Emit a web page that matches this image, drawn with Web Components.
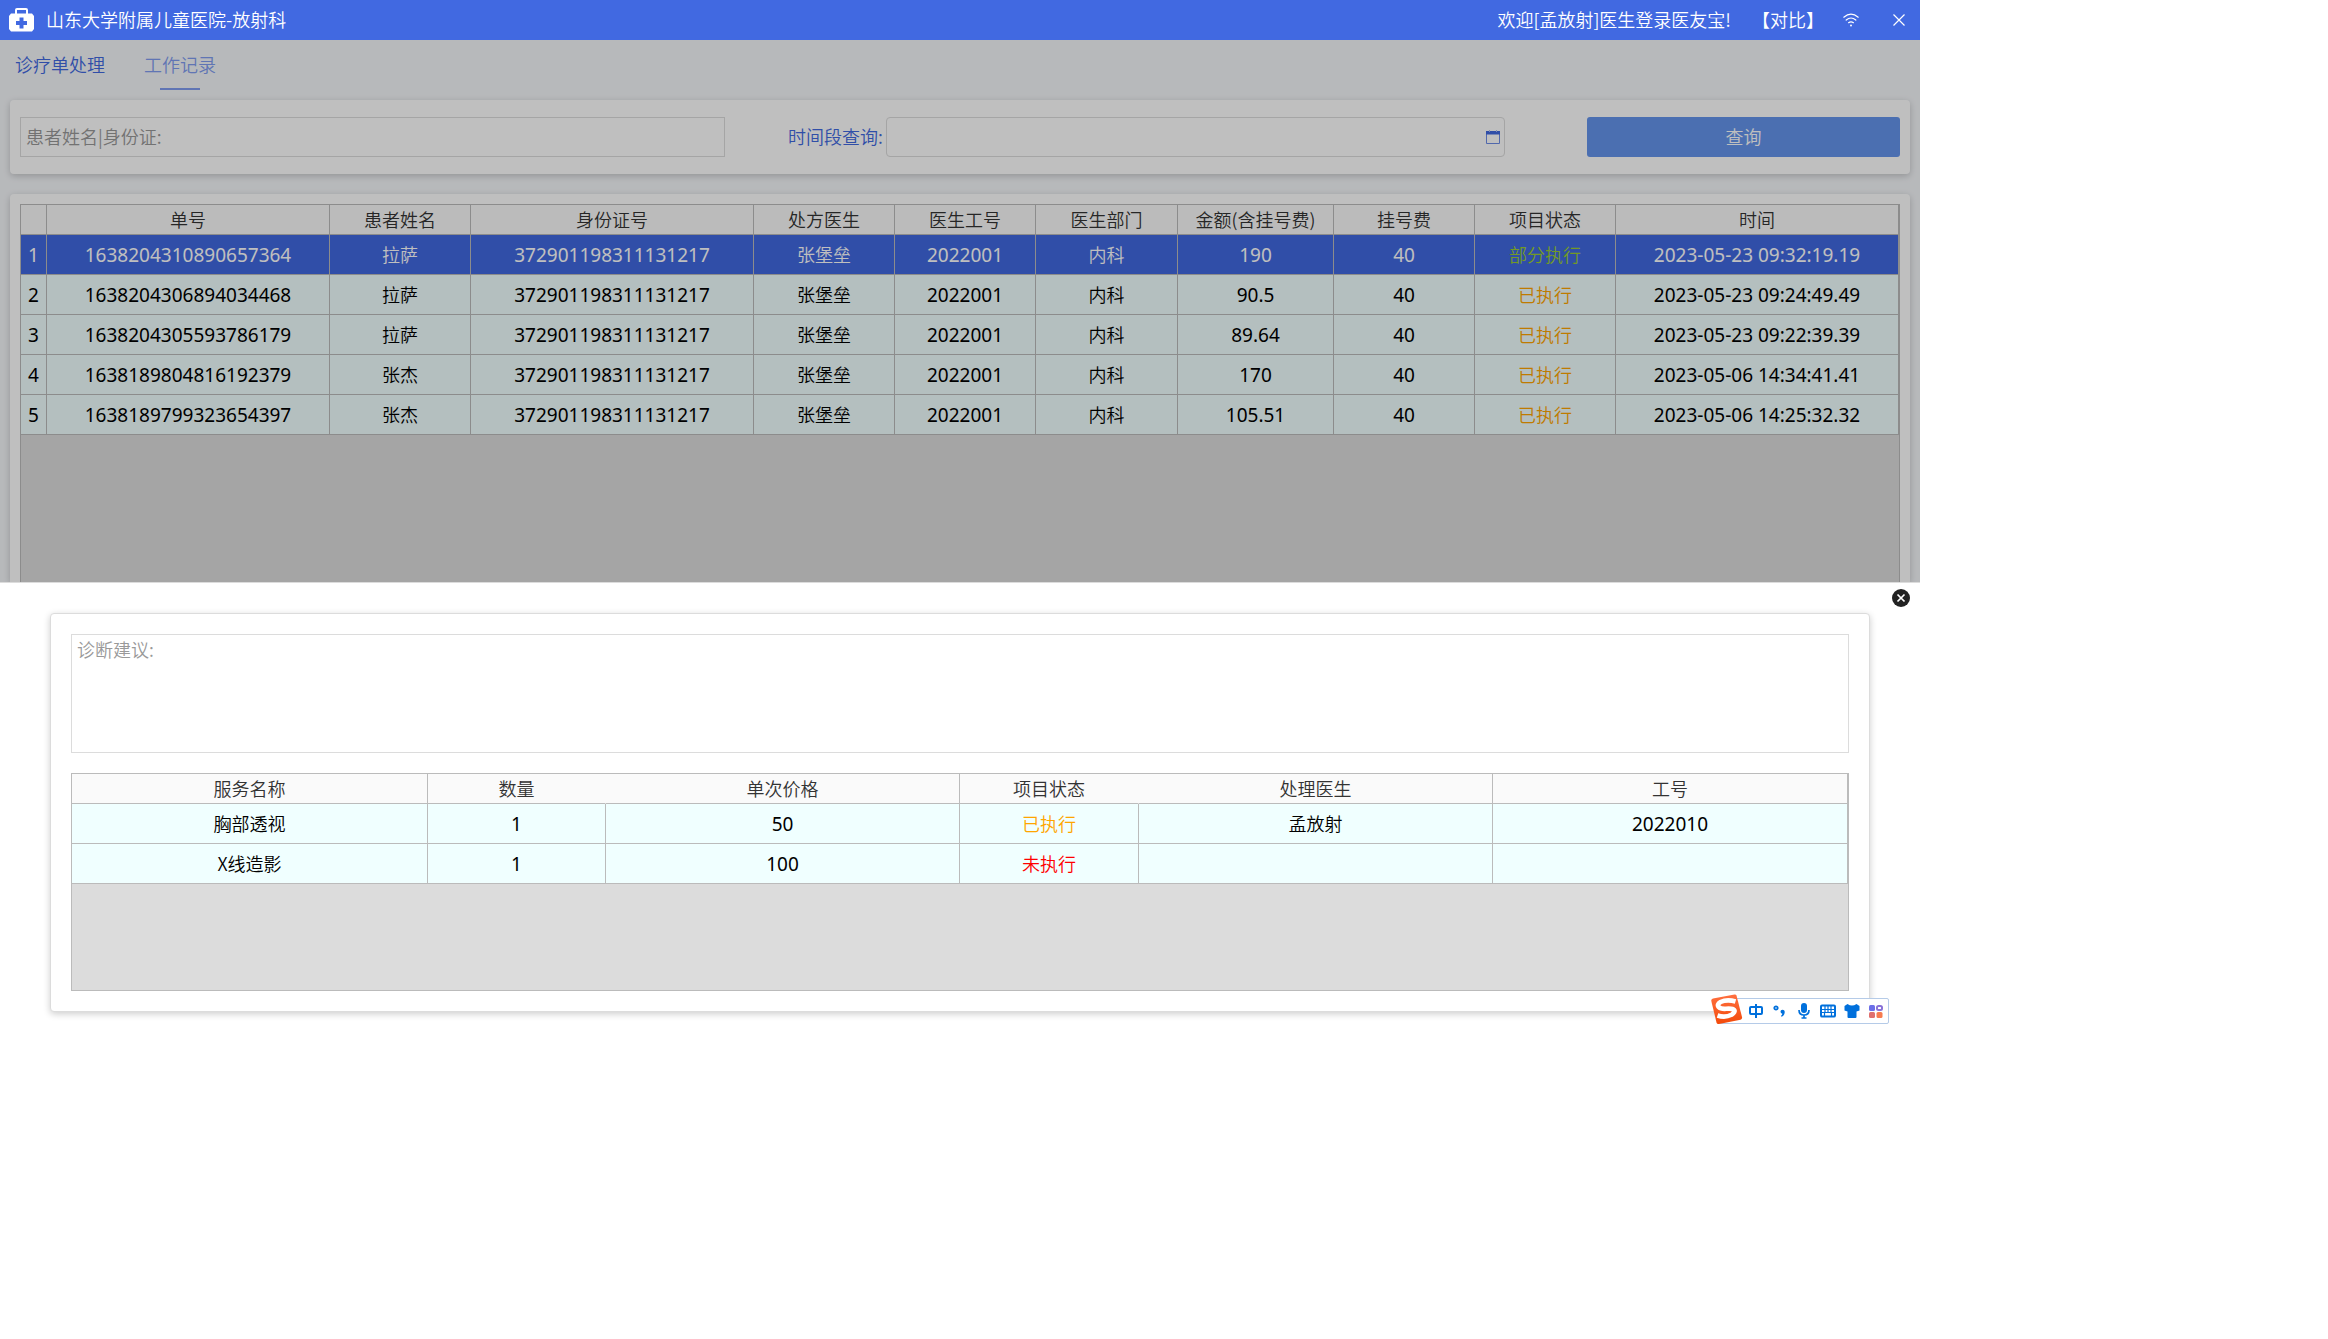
<!DOCTYPE html>
<html lang="zh-CN">
<head>
<meta charset="utf-8">
<title>山东大学附属儿童医院-放射科</title>
<style>
  html, body { margin: 0; background: #fff; }
  body { font: 350 18px/24px "Noto Sans CJK SC", sans-serif; color: #333; }
</style>
</head>
<body>
<hospital-app></hospital-app>
<script>
class BaseElement extends HTMLElement {
  connectedCallback() {
    if (this.shadowRoot) return;
    this.attachShadow({ mode: 'open' }).innerHTML = '<style>*{box-sizing:border-box}' + this.css() + '</style>' + this.html();
  }
  css() { return ''; }
  html() { return '<slot></slot>'; }
}

customElements.define('title-bar', class extends BaseElement {
  css() { return `
    :host { box-sizing: border-box; display: flex; align-items: center; height: 40px; padding: 0 15px 0 9px; background: #4169e1; color: #fff; }
    h1 { font: inherit; margin: 0 auto 0 12px; padding-bottom: 2px; }
    span { padding-bottom: 2px; }
    svg { display: block; }
    button { border: 0; background: none; padding: 0; margin: 0; font: inherit; color: inherit; }
    .compare { margin: 0 19px 0 21px; padding-bottom: 2px; }
    .close { margin-left: 34px; }
  `; }
  html() { return `
    <svg width="25" height="24" viewBox="0 0 25 24"><path d="M7 6V2Q7 1 8 1H17Q18 1 18 2V6" fill="none" stroke="#fff" stroke-width="2"/><path fill="#fff" fill-rule="evenodd" d="M2 5.500H23L25 8V21L23 23.500H2L0 21V8ZM10.500 9.500V13H7V17H10.500V20.500H14.500V17H18V13H14.500V9.500Z"/></svg>
    <h1>山东大学附属儿童医院-放射科</h1>
    <span>欢迎[孟放射]医生登录医友宝!</span>
    <button class="compare">【对比】</button>
    <svg width="16" height="14" viewBox="0 0 16 14" fill="none" stroke="#fff" stroke-width="1.200" stroke-linecap="round"><path d="M.8 4.200Q8-2 15.200 4.200M3.200 7Q8 3 12.800 7M5.600 9.700Q8 7.900 10.400 9.700"/><circle cx="8" cy="12.600" r=".4"/></svg>
    <button class="close" aria-label="关闭窗口"><svg width="12" height="12" viewBox="0 0 12 12" stroke="#fff" stroke-width="1.200"><path d="M.5.500 11.500 11.500M11.500.500.500 11.500"/></svg></button>
  `; }
});

customElements.define('main-tabs', class extends BaseElement {
  css() { return `
    :host { box-sizing: border-box; display: flex; gap: 39px; height: 50px; padding-left: 5px; margin-bottom: 10px; }
    a { display: flex; flex-direction: column; align-items: center; justify-content: space-between; padding-top: 12px; color: #4169e1; text-decoration: none; }
    a.on { color: #819df0; }
    a.on::after { content: ""; width: 40px; height: 2px; background: #819df0; }
  `; }
  html() { return `<a href="#orders">诊疗单处理</a><a href="#log" class="on">工作记录</a>`; }
});

customElements.define('app-card', class extends BaseElement {
  css() { return `
    :host { box-sizing: border-box; display: block; background: #fff; border-radius: 4px; box-shadow: 0 2px 7px rgba(0,0,0,.2); }
  `; }
});

customElements.define('search-form', class extends BaseElement {
  css() { return `
    :host { display: grid; grid-template-columns: 705fr 63fr 717fr 82fr 313fr; padding: 17px 10px; }
    input, button { font: inherit; height: 40px; margin: 0; outline: 0; min-width: 0; }
    input { border: 1px solid #dcdcdc; background: #fff; padding: 0 5px 2px; color: #333; }
    input::placeholder { color: #999; opacity: 1; }
    .range { grid-column: 3; display: flex; align-items: center; gap: 3px; color: #4169e1; }
    label { padding-bottom: 2px; }
    .box { flex: 1; display: flex; align-items: center; height: 40px; border: 1px solid #dcdcdc; border-radius: 4px; padding-right: 4px; }
    .box input { flex: 1; height: 38px; border: 0; background: none; }
    .box button { height: 14px; border: 0; padding: 0; background: none; display: block; }
    svg { display: block; }
    .go { grid-column: 5; border: 0; border-radius: 3px; padding: 0 0 2px; background: #6495ed; color: #fff; }
  `; }
  html() { return `
    <input type="text" aria-label="患者姓名|身份证" placeholder="患者姓名|身份证:">
    <div class="range"><label for="range">时间段查询:</label>
      <div class="box"><input id="range" type="text"><button aria-label="选择日期"><svg width="14" height="14" viewBox="0 0 14 14"><path d="M.5 4V13.500H13.500V4" fill="none" stroke="#6c8be6"/><path d="M0 1H14V4.500H0Z" fill="#4169e1"/><path d="M3 0H4V2H3ZM10 0H11V2H10Z" fill="#a9bbf1"/></svg></button></div>
    </div>
    <button class="go">查询</button>
  `; }
});

const ORDERS = {
  cols: [26, 283, 141, 283, 141, 141, 142, 156, 141, 141, 283],
  head: ['', '单号', '患者姓名', '身份证号', '处方医生', '医生工号', '医生部门', '金额(含挂号费)', '挂号费', '项目状态', '时间'],
  rows: [
    ['1', '1638204310890657364', '拉萨', '372901198311131217', '张堡垒', '2022001', '内科', '190', '40', '部分执行', '2023-05-23 09:32:19.19'],
    ['2', '1638204306894034468', '拉萨', '372901198311131217', '张堡垒', '2022001', '内科', '90.5', '40', '已执行', '2023-05-23 09:24:49.49'],
    ['3', '1638204305593786179', '拉萨', '372901198311131217', '张堡垒', '2022001', '内科', '89.64', '40', '已执行', '2023-05-23 09:22:39.39'],
    ['4', '1638189804816192379', '张杰', '372901198311131217', '张堡垒', '2022001', '内科', '170', '40', '已执行', '2023-05-06 14:34:41.41'],
    ['5', '1638189799323654397', '张杰', '372901198311131217', '张堡垒', '2022001', '内科', '105.51', '40', '已执行', '2023-05-06 14:25:32.32'],
  ],
  selected: 0,
};
const SERVICES = {
  cols: [356, 178, 354, 179, 354, 355],
  head: ['服务名称', '数量', '单次价格', '项目状态', '处理医生', '工号'],
  openHead: [1, 3],
  rows: [
    ['胸部透视', '1', '50', '已执行', '孟放射', '2022010'],
    ['X线造影', '1', '100', '未执行', '', ''],
  ],
};
const SOURCES = { orders: ORDERS, services: SERVICES };
const STATUS = { '部分执行': 'part', '已执行': 'done', '未执行': 'todo' };

customElements.define('data-grid', class extends BaseElement {
  css() { return `
    :host { box-sizing: border-box; display: block; border: 1px solid #bbb; background: #dcdcdc; }
    table { width: 100%; table-layout: fixed; border-collapse: separate; border-spacing: 0; }
    th, td { padding: 0 0 2px; text-align: center; white-space: nowrap; border-right: 1px solid #bbb; border-bottom: 1px solid #bbb; }
    th { height: 30px; font-weight: 350; background: #fafafa; color: #333; }
    th.open { border-right-color: #fafafa; }
    td { height: 40px; font-weight: 350; background: #f0ffff; color: #000; }
    td.num { font-family: "Noto Sans", sans-serif; font-size: 19px; font-weight: 400; padding: 0; }
    .sel td { background: #4169e1; color: #fff; }
    td.done { color: #ffa500; } td.todo { color: #f00; }
    .sel td.part { color: #9acd32; }
  `; }
  html() {
    const d = SOURCES[this.getAttribute('source')];
    const open = d.openHead || [];
    const cell = v => `<td class="${STATUS[v] || (/^[\d .:-]+$/.test(v) ? 'num' : '')}">${v}</td>`;
    return `<table><colgroup>${d.cols.map(w => `<col style="width:${w}px">`).join('')}</colgroup>
      <thead><tr>${d.head.map((h, i) => `<th scope="col"${open.includes(i) ? ' class="open"' : ''}>${h}</th>`).join('')}</tr></thead>
      <tbody>${d.rows.map((r, i) => `<tr${i === d.selected ? ' class="sel"' : ''}>${r.map(cell).join('')}</tr>`).join('')}</tbody></table>`;
  }
});

customElements.define('detail-drawer', class extends BaseElement {
  css() { return `
    :host { display: block; position: relative; background: #fff; border-top: 1px solid #dcdcdc; padding: 30px 50px; }
    app-card { border: 1px solid #dcdcdc; padding: 20px; }
    textarea { display: block; width: 100%; height: 119px; border: 1px solid #dcdcdc; margin: 0 0 20px; padding: 2px 5px; font: inherit; resize: none; outline: 0; }
    textarea::placeholder { color: #999; opacity: 1; }
    data-grid { min-height: 218px; }
    .close { position: absolute; top: 6px; right: 10px; width: 18px; height: 18px; border: 0; padding: 0; background: none; }
    svg { display: block; }
  `; }
  html() { return `
    <button class="close" aria-label="关闭"><svg width="18" height="18" viewBox="0 0 18 18"><circle cx="9" cy="9" r="9" fill="#222"/><path d="M5.500 5.500 12.500 12.500M12.500 5.500 5.500 12.500" stroke="#fff" stroke-width="1.700"/></svg></button>
    <app-card>
      <textarea aria-label="诊断建议" placeholder="诊断建议:"></textarea>
      <data-grid source="services"></data-grid>
    </app-card>
  `; }
});

customElements.define('ime-bar', class extends BaseElement {
  css() { return `
    :host { box-sizing: border-box; position: absolute; right: 31px; bottom: 18px; display: flex; align-items: center; gap: 8px; height: 26px; padding: 0 4px 0 28px; background: #fff; border: 1px solid #b5cbe8; border-radius: 2px; }
    .logo { position: absolute; left: -9px; top: -5px; }
    svg { display: block; }
  `; }
  html() { return `
    <svg class="logo" width="32" height="32" viewBox="0 0 32 32"><defs><linearGradient id="o" x2="0" y2="1"><stop offset="0" stop-color="#ff7040"/><stop offset="1" stop-color="#f34a0a"/></linearGradient></defs><path d="M2 4.500 23.500.500Q25 .300 25.500 1.500L31 23Q31.500 25 29.500 25.700L8 30Q6 30.400 5.500 28.500L.3 7Q0 5 2 4.500Z" fill="url(#o)"/><path d="M24.500 7.500Q16 5 9.500 8C4 11.500 8 15.200 15 14.800 24 14 26 17 20.500 20.800Q14 24 6.500 21.500" fill="none" stroke="#fff" stroke-width="4.600"/></svg>
    <svg width="16" height="16" viewBox="0 0 16 16" fill="none" stroke="#0070dc" stroke-width="2"><rect x="2" y="4" width="12" height="7" rx="1"/><path d="M8 1V15"/></svg>
    <svg width="16" height="16" viewBox="0 0 16 16"><circle cx="4" cy="5" r="1.700" fill="none" stroke="#0070dc" stroke-width="1.800"/><path d="M8.500 8.500Q8.500 6.700 10.500 6.700 12.900 6.700 12.700 9.500 12.400 12.800 9.200 13.800V12.500Q10.300 12 10.300 10.800 8.500 10.500 8.500 8.500Z" fill="#0070dc"/></svg>
    <svg width="16" height="16" viewBox="0 0 16 16"><rect x="5" y="0" width="6" height="10" rx="3" fill="#0070dc"/><path d="M3 7Q3 12 8 12 13 12 13 7M8 12V15.500M5.500 15H10.500" fill="none" stroke="#0070dc" stroke-width="1.700"/></svg>
    <svg width="16" height="16" viewBox="0 0 16 16"><rect x="1" y="2.500" width="14" height="11" rx="1" fill="none" stroke="#0070dc" stroke-width="2"/><path d="M2 6.500H14M2 9.500H14M5 3V9.500M8 3V9.500M11 3V9.500M4.500 10V13M11.500 10V13" stroke="#0070dc" stroke-width="1.200"/></svg>
    <svg width="16" height="16" viewBox="0 0 16 16"><path d="M3.500 1Q8 4 12.500 1L15.500 3V7.500L12.500 8.500V14Q12.500 15 11.500 15H4.500Q3.500 15 3.500 14V8.500L.5 7.500V3Z" fill="#0070dc"/></svg>
    <svg width="16" height="16" viewBox="0 0 16 16"><rect x="1" y="2" width="6" height="6" rx="1.500" fill="#6c6fe8"/><rect x="9" y="3" width="5" height="4" rx="1.500" fill="none" stroke="#8a72d8" stroke-width="2"/><rect x="1" y="9" width="6" height="6" rx="1.500" fill="#e0706e"/><rect x="8.500" y="9" width="6" height="6" rx="1.500" fill="#f77c50"/></svg>
  `; }
});

customElements.define('hospital-app', class extends BaseElement {
  css() { return `
    :host { display: block; position: relative; max-width: 1920px; }
    main { position: relative; background: #f5f7fa; padding: 0 10px; overflow: hidden; }
    .records { margin-top: 20px; padding: 10px 10px 0; border-radius: 4px 4px 0 0; }
    .records data-grid { min-height: 378px; border-bottom: 0; }
    .shade { position: absolute; inset: 0; background: rgba(0,0,0,.25); }
  `; }
  html() { return `
    <title-bar></title-bar>
    <main>
      <main-tabs></main-tabs>
      <app-card><search-form></search-form></app-card>
      <app-card class="records"><data-grid source="orders"></data-grid></app-card>
      <div class="shade"></div>
    </main>
    <detail-drawer></detail-drawer>
    <ime-bar></ime-bar>
  `; }
});
</script>
</body>
</html>
